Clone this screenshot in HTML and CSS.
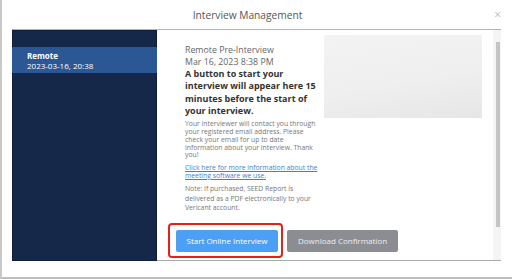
FILE: index.html
```html
<!DOCTYPE html>
<html lang="en">
<head>
    <meta charset="UTF-8">
    <title>Interview Management</title>
    <link rel="stylesheet" href="styles.css">
</head>
<body>
    <div class="dialog">
        <div class="dialog-header">
            <span class="dialog-title">Interview Management</span>
            <span class="close">&times;</span>
        </div>
        <div class="dialog-body">
            <div class="sidebar">
                <div class="side-item active">
                    <div class="side-type">Remote</div>
                    <div class="side-date">2023-03-16, 20:38</div>
                </div>
            </div>
            <div class="main">
                <div class="scroll-area">
                    <div class="info-row">
                        <div class="info-text">
                            <div class="meta">Remote Pre-Interview</div>
                            <div class="meta">Mar 16, 2023 8:38 PM</div>
                            <div class="notice">A button to start your interview will appear here 15 minutes before the start of your interview.</div>
                            <p class="small">Your interviewer will contact you through your registered email address. Please check your email for up to date information about your interview. Thank you!</p>
                            <p class="small link"><a href="#">Click here for more information about the meeting software we use.</a></p>
                            <p class="small note">Note: If purchased, SEED Report is delivered as a PDF electronically to your Vericant account.</p>
                        </div>
                        <div class="preview"></div>
                    </div>
                    <div class="actions">
                        <button class="btn btn-primary">Start Online Interview<span class="highlight"></span></button>
                        <button class="btn btn-gray">Download Confirmation</button>
                    </div>
                </div>
                <div class="scrollbar"><div class="thumb"></div></div>
            </div>
        </div>
    </div>
</body>
</html>
```
FILE: styles.css
```css
body {
    margin: 0;
    height: 277px;
    border-left: 2px solid #c9c9c9;
    border-bottom: 2px solid #bdbdbd;
    background: #fff;
    font-family: "Open Sans", "Noto Sans", sans-serif;
    overflow: hidden;
}
.dialog {
    margin: 0 11px 0 10px;
}
.dialog-header {
    position: relative;
    height: 29px;
    border-bottom: 1px solid #b4b4b4;
    display: flex;
    align-items: center;
    justify-content: center;
}
.dialog-title {
    font-size: 10.2px;
    color: #555;
    margin-left: -18px;
}
.close {
    position: absolute;
    right: 0;
    top: 6px;
    font-size: 12px;
    color: #bbb;
}
.dialog-body {
    display: flex;
    height: 231px;
}
.sidebar {
    width: 145px;
    background: #16284a;
    border: 1px solid #0f1d38;
    box-sizing: border-box;
    padding-top: 16px;
}
.side-item {
    height: 26px;
    padding: 4px 0 0 14px;
    box-sizing: border-box;
    color: #fff;
    font-size: 8px;
    line-height: 10px;
}
.side-item.active {
    background: #2b5794;
    margin: 0 -1px;
    padding-left: 15px;
}
.side-type {
    font-weight: bold;
}
.main {
    flex: 1;
    display: flex;
    border-bottom: 1px solid #ababab;
}
.scroll-area {
    flex: 1;
    padding: 14px 0 0 19px;
}
.info-row {
    display: flex;
    gap: 5px;
}
.info-text {
    width: 134px;
    padding-left: 9px;
}
.meta {
    font-size: 8.8px;
    line-height: 12px;
    color: #666;
}
.notice {
    font-size: 9px;
    line-height: 12.4px;
    font-weight: bold;
    color: #333;
}
.small {
    font-size: 6.8px;
    line-height: 7.8px;
    color: #777;
    margin: 2.5px 0 0;
}
.small a {
    color: #3b82d6;
}
.link {
    margin-top: 5px;
}
.note {
    line-height: 9.5px;
    margin-top: 4.5px;
}
.preview {
    width: 158px;
    height: 83px;
    margin-top: -9px;
    background: linear-gradient(170deg, #f3f3f3 0%, #efefef 55%, #e6e6e6 100%);
}
.actions {
    display: flex;
    gap: 9px;
    margin-top: 17px;
}
.btn {
    position: relative;
    height: 22px;
    border: none;
    border-radius: 2px;
    color: #fff;
    font-family: "Open Sans", "Noto Sans", sans-serif;
    font-size: 8px;
    padding: 0;
}
.btn-primary {
    width: 102px;
    background: #4c9ff2;
}
.btn-gray {
    width: 111px;
    background: #8b8d93;
    color: #eee;
}
.highlight {
    position: absolute;
    top: -7px;
    left: -8px;
    right: -5px;
    bottom: -6px;
    border: 2px solid #e8201a;
    border-radius: 4px;
}
.scrollbar {
    width: 8px;
    background: #f4f4f4;
    padding-top: 12px;
}
.thumb {
    width: 4px;
    height: 185px;
    margin-left: 3px;
    background: #c4c4c4;
}
```
